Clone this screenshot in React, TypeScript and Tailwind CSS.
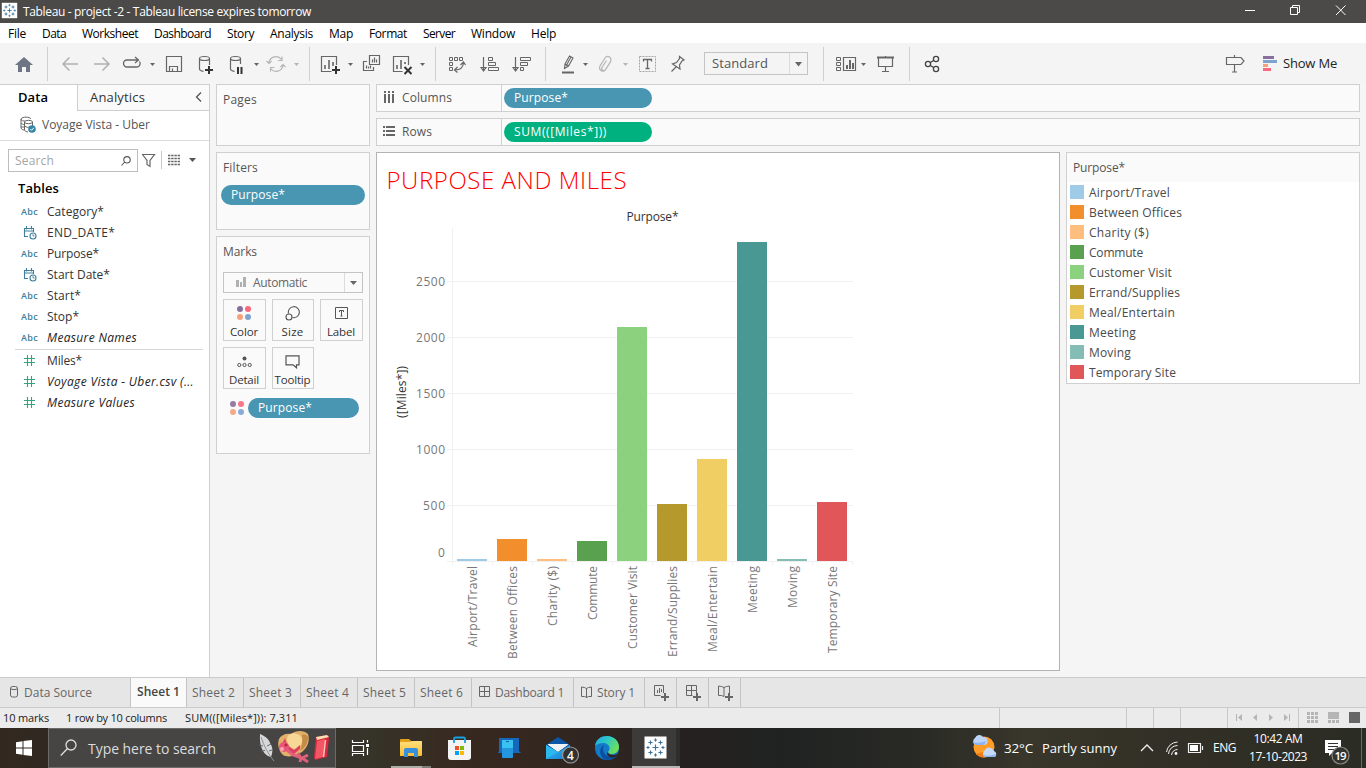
import React, { useLayoutEffect, useRef } from "react";

/* Text set to a fixed advance width by adjusting its tracking. */
function T({ w, className = "", children }: { w: number; className?: string; children: string }) {
  const ref = useRef<HTMLSpanElement>(null);
  useLayoutEffect(() => {
    const el = ref.current;
    if (!el) return;
    el.style.letterSpacing = "0px";
    const natural = el.getBoundingClientRect().width;
    el.style.letterSpacing = `${(w - natural) / children.length}px`;
  }, [w, children]);
  return (
    <span ref={ref} className={`inline-block shrink-0 whitespace-pre ${className}`}>
      {children}
    </span>
  );
}

/* Toolbar cell: spans x..x2 of the toolbar, drawn in window coordinates. */
function Cell({ x, x2, y = 43, h = 41, children }: { x: number; x2: number; y?: number; h?: number; children?: React.ReactNode }) {
  return (
    <svg
      className="block shrink-0"
      width={x2 - x}
      height={h}
      viewBox={`${x} ${y} ${x2 - x} ${h}`}
      fill="none"
      stroke="#666"
      strokeWidth="1.2"
    >
      {children}
    </svg>
  );
}

const Sep = () => <div className="mt-1 h-[34px] w-px shrink-0 bg-[#d0d0d0]" />;
const Caret = ({ x, c = "#666" }: { x: number; c?: string }) => <path d={`M${x} 63h5l-2.5 3z`} fill={c} stroke="none" />;
const Plus = ({ x, y, c = "#333" }: { x: number; y: number; c?: string }) => (
  <path d={`M${x - 4} ${y}h8M${x} ${y - 4}v8`} stroke={c} strokeWidth="2" />
);

function Snowflake({ x, y, s, c }: { x: number; y: number; s: number; c: string }) {
  const plus = (px: number, py: number, r: number) => `M${px - r} ${py}h${2 * r}M${px} ${py - r}v${2 * r}`;
  return (
    <g transform={`translate(${x} ${y}) scale(${s})`}>
      <rect x="-11" y="-11" width="22" height="22" fill="#fff" stroke="none" />
      <path
        d={plus(0, 0, 3) + plus(-5, -5, 2.1) + plus(5, -5, 2.1) + plus(-5, 5, 2.1) + plus(5, 5, 2.1)}
        stroke={c}
        strokeWidth="1.2"
      />
      <path d={plus(0, -7.5, 1.6) + plus(0, 7.5, 1.6) + plus(-7.5, 0, 1.6) + plus(7.5, 0, 1.6)} stroke={c} strokeWidth="1" />
    </g>
  );
}

const menus: [string, number][] = [
  ["File", 18],
  ["Data", 24],
  ["Worksheet", 56],
  ["Dashboard", 57],
  ["Story", 27],
  ["Analysis", 43],
  ["Map", 24],
  ["Format", 38],
  ["Server", 32],
  ["Window", 44],
  ["Help", 25],
];

function TitleBar() {
  return (
    <div className="flex h-[23px] bg-[#4b4a48] text-white">
      <Cell x={0} x2={23} y={0} h={23}>
        <Snowflake x={9.5} y={10.5} s={0.7} c="#2c6e9b" />
      </Cell>
      <T w={288} className="text-[12px] leading-[23px]">
        Tableau - project -2 - Tableau license expires tomorrow
      </T>
      <div className="ml-auto">
        <Cell x={1226} x2={1366} y={0} h={23}>
          <g stroke="#fff" strokeWidth="1">
            <path d="M1245 10.5h10M1290.500 7.500h7v7h-7zM1292.500 7.500v-2h7v7h-2M1336 5.500l9.500 9.500M1345.500 5.500L1336 15" />
          </g>
        </Cell>
      </div>
    </div>
  );
}

function MenuBar() {
  return (
    <div className="flex h-5 gap-4 bg-white pl-2 text-[12px] leading-[21px] text-black">
      {menus.map(([m, w]) => (
        <T key={m} w={w}>
          {m}
        </T>
      ))}
    </div>
  );
}

function Toolbar() {
  return (
    <div className="flex h-[41px] bg-[#f4f4f4]">
      <Cell x={0} x2={47}>
        <path d="M24 57l9 8h-3v7h-4v-5h-4v5h-4v-7h-3z" fill="#6d7682" stroke="none" />
      </Cell>
      <Sep />
      <Cell x={48} x2={309}>
        <g stroke="#b0b0b0" strokeWidth="1.5">
          <path d="M78 64H63M69.500 57.500L63 64l6.500 6.500M94 64h15M102.500 57.500L109 64l-6.500 6.500" />
        </g>
        <path d="M132 60h-5a3.500 3.500 0 0 0 0 7h10a3.500 3.500 0 0 0 2.500-5.500M131 60h7M135 57l3.500 3-3.500 3" strokeWidth="1.300" />
        <Caret x={150} />
        <path d="M166.500 56.500h15v15h-15zM169.500 71.500v-5h8v5M172.500 71v-2.500" />
        <path d="M199.500 59v10c0 1.500 2 2 4 2.300M209.500 59v6" />
        <ellipse cx="204.500" cy="58.500" rx="5" ry="2" />
        <Plus x={209} y={70} />
        <path d="M230.500 59v10c0 1.500 2 2 4 2.300M240.500 59v5" />
        <ellipse cx="235.500" cy="58.500" rx="5" ry="2" />
        <path d="M238 67v7M241.500 67v7" stroke="#333" strokeWidth="2" />
        <Caret x={254} />
        <g stroke="#b5b5b5">
          <path d="M269 62.500a7 7 0 0 1 12.500-3M283 65.500a7 7 0 0 1-12.500 3M278 60.500h4v-4M274.500 67.500h-4v4M266.500 61l2.500 2.500 2.500-2.500M280.500 67l2.500-2.500 2.500 2.500" />
        </g>
        <Caret x={294} c="#b5b5b5" />
      </Cell>
      <Sep />
      <Cell x={310} x2={435}>
        <path d="M336.500 65v-8.500h-15v15h10" strokeWidth="1.200" />
        <path d="M325 69v-4M329 69v-9M333 66v-4" strokeWidth="1.600" />
        <Plus x={336} y={70} />
        <Caret x={348} />
        <path d="M369.500 55.500h10v9h-10zM367 61.500h-3.500v9h10v-3.500M372.500 62.500v-3M374.500 62.500v-5M376.500 62.500v-3M366.500 68.500v-3M368.500 68.500v-2M370.500 68.500v-3" />
        <path d="M408.500 65v-8.500h-15v15h9" strokeWidth="1.200" />
        <path d="M397 69v-4M401 69v-9M405 64v-2" strokeWidth="1.600" />
        <path d="M404.500 67l7 7M411.500 67l-7 7" stroke="#333" strokeWidth="2" />
        <Caret x={420} />
      </Cell>
      <Sep />
      <Cell x={436} x2={545}>
        <path d="M449.500 57.500h3v3h-3zM454.500 57.500h3v3h-3zM459.500 57.500h3v3h-3zM449.500 62.500h3v3h-3zM449.500 67.500h3v3h-3z" strokeWidth="1" />
        <path d="M455 70c5 0 8-2 8.500-7M457.500 67l-3 3 3 2.500M460.500 65l3-3 2 3" />
        <path d="M483.500 57v13M481 67.500l2.500 3.500 2.500-3.500zM515.500 57v13M513 67.500l2.500 3.500 2.500-3.500z" />
        <path d="M488.500 57.500h4v3h-4zM488.500 62.500h7v3h-7zM488.500 67.500h10v3h-10zM520.500 57.500h10v3h-10zM520.500 62.500h7v3h-7zM520.500 67.500h3v3h-3z" strokeWidth="1" />
      </Cell>
      <Sep />
      <Cell x={546} x2={704}>
        <path d="M565 64l4.500-8 3.500 2-4.500 8-4 2.500zM565 64l3.500 2M571 57l-5 9" strokeWidth="1.100" />
        <path d="M562 72.500h12" strokeWidth="2" />
        <Caret x={583} />
        <path d="M600 66l5-8a3.200 3.200 0 0 1 5.500 3.500l-5 8a2 2 0 0 1-3.500-2l4.500-7M601 64c-2 3-2 5 0 6.500s4 .5 5-1.500l5-8" stroke="#b5b5b5" />
        <Caret x={623} c="#b5b5b5" />
        <path d="M639.500 56.500h16v15h-16z" strokeDasharray="2 1" stroke="#a5a5a5" strokeWidth="1" />
        <path d="M643.500 61.500v-2h8v2M647.500 59.500v9M645.500 68.500h4" strokeWidth="1.300" />
        <path d="M679.500 56.500l4.500 3.500-2 1-2.500 4 .5 4-7.500-5 4-1.500 3-4zM676 67l-4.500 4.500" />
      </Cell>
      <div className="mt-[9px] flex h-[23px] w-[104px] shrink-0 border border-[#c4c4c4]">
        <div className="w-[85px] border-r border-[#dcdcdc] pl-[7px] text-[13px] leading-[20px] text-[#555]">
          <T w={56}>Standard</T>
        </div>
        <svg className="ml-[5px] mt-[9px]" width="8" height="5" viewBox="0 0 8 5">
          <path d="M0 0h7L3.500 4.500z" fill="#666" />
        </svg>
      </div>
      <Cell x={808} x2={823} />
      <Sep />
      <Cell x={824} x2={909}>
        <path d="M836.500 57.500h4v3h-4zM836.500 62.500h4v3h-4zM836.500 67.500h4v3h-4z" strokeWidth="1" />
        <path d="M843.500 57.500h12v13h-12z" />
        <path d="M847 69v-4M850 69v-9M853 69v-6" strokeWidth="2" />
        <Caret x={861} />
        <path d="M877 57.500h17" strokeWidth="2" />
        <path d="M878.500 58v8.500h14V58M885.500 56v2M885.500 67v5M882 71.500h7" />
      </Cell>
      <Sep />
      <Cell x={910} x2={1283}>
        <g stroke="#444" strokeWidth="1.300">
          <circle cx="928" cy="64" r="2.600" />
          <circle cx="936" cy="59" r="2.600" />
          <circle cx="936" cy="69" r="2.600" />
          <path d="M930.500 62.500l3-2M930.500 65.500l3 2" />
        </g>
        <path d="M1226.500 57.500h14.500l3 3.500-3 3.500h-14.500zM1234.500 55v2.500M1234.500 65v7M1232 72h5" />
        <g stroke="none">
          <path d="M1263 56h11v3h-11z" fill="#87719c" />
          <path d="M1263 60h14v3h-14z" fill="#7fa3cf" />
          <path d="M1263 64h5v3h-5z" fill="#f4a27c" />
          <path d="M1263 68h8v3h-8z" fill="#f8697c" />
        </g>
      </Cell>
      <T w={54} className="text-[13px] leading-[40px] text-[#222]">Show Me</T>
    </div>
  );
}

type Field = { kind: "abc" | "date" | "num"; name: string; w: number; italic?: boolean };
const dims: Field[] = [
  { kind: "abc", name: "Category*", w: 57 },
  { kind: "date", name: "END_DATE*", w: 68 },
  { kind: "abc", name: "Purpose*", w: 52 },
  { kind: "date", name: "Start Date*", w: 63 },
  { kind: "abc", name: "Start*", w: 34 },
  { kind: "abc", name: "Stop*", w: 32 },
  { kind: "abc", name: "Measure Names", w: 90, italic: true },
];
const measures: Field[] = [
  { kind: "num", name: "Miles*", w: 35 },
  { kind: "num", name: "Voyage Vista - Uber.csv (...", w: 147, italic: true },
  { kind: "num", name: "Measure Values", w: 88, italic: true },
];

function FieldRow({ f }: { f: Field }) {
  return (
    <div className="flex h-[21px] items-center">
      <div className="flex w-[47px] shrink-0 pl-[21px]">
        {f.kind === "abc" && (
          <T w={17} className="pt-px text-[9px] leading-[20px] font-semibold text-[#3d7f9c]">Abc</T>
        )}
        {f.kind === "date" && (
          <svg className="ml-[2px] mt-px" width="15" height="14" viewBox="0 0 15 14" fill="none" stroke="#3d7f9c" strokeWidth="1.100">
            <path d="M5 10.500H1.500v-8h9V6M1.500 5h9M3.500 0v3.500M8.500 0v3.500" />
            <circle cx="10" cy="10" r="3" />
            <path d="M10 8.200V10h1.500" strokeWidth=".9" />
          </svg>
        )}
        {f.kind === "num" && (
          <svg className="ml-[3px]" width="11" height="11" viewBox="0 0 11 11" fill="none" stroke="#2fa67c" strokeWidth="1.100">
            <path d="M3.500 0v11M7.500 0v11M0 3.500h11M0 7.500h11" />
          </svg>
        )}
      </div>
      <T w={f.w} className={f.italic ? "text-[12px] leading-[20px] italic text-[#222]" : "text-[12px] leading-[20px] text-[#333]"}>
        {f.name}
      </T>
    </div>
  );
}

function DataPane() {
  return (
    <div className="flex w-[210px] shrink-0 flex-col border-r border-t border-[#cfcfcf] bg-white">
      <div className="flex h-[26px] shrink-0">
        <div className="w-[77px] pl-[18px] text-[13px] leading-[25px] font-semibold text-black">
          <T w={30}>Data</T>
        </div>
        <div className="flex flex-1 border-b border-l border-[#cfcfcf] bg-[#fafafa] pl-3 text-[13px] leading-[25px] text-[#333]">
          <T w={55}>Analytics</T>
          <svg className="ml-[50px] mt-[7px]" width="7" height="10" viewBox="0 0 7 10" fill="none" stroke="#555" strokeWidth="1.300">
            <path d="M6 .5L1.500 5 6 9.500" />
          </svg>
        </div>
      </div>
      <div className="flex h-[30px] shrink-0 border-b border-[#dcdcdc] text-[12px] leading-[28px] text-[#555]">
        <svg className="ml-5 mr-[5px] mt-[5px] shrink-0" width="17" height="18" viewBox="0 0 17 18" fill="none" stroke="#666" strokeWidth="1">
          <path d="M1 3v9c0 1 2 2 3 2M11 3C10 .5 2 .5 1 3c0 2 3 2 4 2M1 7c1 1 2 1.500 3 1.500M1 11h3" />
          <ellipse cx="8.500" cy="6" rx="4" ry="1.700" />
          <path d="M4.500 6v8c0 1 2 2 3.500 2M12.500 6v4M4.500 10c2 1.500 4 1.500 5 1" />
          <circle cx="12" cy="13" r="3.800" fill="#3485a8" stroke="none" />
          <path d="M10.300 13l1.300 1.300 2.200-2.500" stroke="#fff" />
        </svg>
        <T w={108}>Voyage Vista - Uber</T>
      </div>
      <div className="mt-2 flex h-[23px] shrink-0 pl-2">
        <div className="flex h-[23px] w-[130px] border border-[#bdbdbd] pl-[6px] text-[12px] leading-[22px] text-[#a5a5a5]">
          <T w={39}>Search</T>
          <svg className="ml-[67px] mt-[6px]" width="10" height="10" viewBox="0 0 10 10" fill="none" stroke="#555" strokeWidth="1.100">
            <circle cx="6" cy="3.800" r="3.200" />
            <path d="M3.700 6L.5 9.500" />
          </svg>
        </div>
        <svg className="ml-1" width="60" height="23" viewBox="142 149 60 23" fill="none" stroke="#666" strokeWidth="1.200">
          <path d="M142.500 154.500h12l-4.500 6v6l-3-2v-4z" />
          <path d="M161.500 151v18" stroke="#ccc" strokeWidth="1" />
          <path d="M168 155.500h12M168 158.500h12M168 161.500h12M168 164.500h12" strokeDasharray="2.400 .8" strokeWidth="1.500" />
          <path d="M189 158h7l-3.500 4z" fill="#555" stroke="none" />
        </svg>
      </div>
      <div className="mt-[6px] h-[23px] pl-[18px] text-[13px] leading-[20px] font-semibold text-black">
        <T w={41}>Tables</T>
      </div>
      <div className="h-[148px]">
        {dims.map((f) => (
          <FieldRow key={f.name} f={f} />
        ))}
      </div>
      <div className="ml-[15px] mr-[6px] h-px shrink-0 bg-[#d6d6d6]" />
      <div>
        {measures.map((f) => (
          <FieldRow key={f.name} f={f} />
        ))}
      </div>
    </div>
  );
}

function Dots() {
  return (
    <svg width="14" height="14" viewBox="0 0 14 14">
      <circle cx="3" cy="3" r="3" fill="#87719c" />
      <circle cx="11" cy="3" r="3" fill="#f8697c" />
      <circle cx="3" cy="11" r="3" fill="#f4a27c" />
      <circle cx="11" cy="11" r="3" fill="#7fa3cf" />
    </svg>
  );
}

function MarkButton({ label, w, children }: { label: string; w: number; children: React.ReactNode }) {
  return (
    <div className="flex h-[42px] flex-col items-center border border-[#d0d0d0] pr-px pt-[6px] text-[11.5px] leading-[18px] text-[#333]">
      <div className="flex h-[17px] shrink-0">{children}</div>
      <T w={w}>{label}</T>
    </div>
  );
}

function Pill({ className, w, children }: { className: string; w: number; children: string }) {
  return (
    <div className={`h-5 rounded-full pl-[10px] leading-[20px] font-medium text-white ${className}`}>
      <T w={w}>{children}</T>
    </div>
  );
}

function Shelves() {
  return (
    <div className="ml-[6px] flex w-[154px] shrink-0 flex-col gap-[6px] text-[12px] text-[#555]">
      <div className="h-[62px] border border-[#d0d0d0] bg-[#fafafa] pl-[6px] leading-[30px]">
        <T w={34}>Pages</T>
      </div>
      <div className="h-[78px] border border-[#d0d0d0] bg-[#fafafa]">
        <div className="h-8 pl-[6px] leading-[30px]">
          <T w={35}>Filters</T>
        </div>
        <Pill w={54} className="mx-1 bg-[#4996b2]">Purpose*</Pill>
      </div>
      <div className="h-[218px] border border-[#d0d0d0] bg-[#fafafa]">
        <div className="h-[35px] pl-[6px] leading-[30px]">
          <T w={34}>Marks</T>
        </div>
        <div className="ml-[6px] flex h-[21px] w-[140px] border border-[#c4c4c4] leading-[20px] text-[#666]">
          <div className="flex w-[121px] border-r border-[#dcdcdc]">
            <svg className="ml-3 mr-[7px] mt-[4px]" width="10" height="11" viewBox="0 0 10 11">
              <path d="M0 3h3v7H0zM4 5h2v5H4zM7 0h3v10H7z" fill="#b0b0b0" />
            </svg>
            <T w={54}>Automatic</T>
          </div>
          <svg className="ml-[5px] mt-2" width="8" height="5" viewBox="0 0 8 5">
            <path d="M0 0h7L3.500 4z" fill="#666" />
          </svg>
        </div>
        <div className="ml-[6px] mt-[6px] grid grid-cols-[43px_42px_43px] gap-[6px]">
          <MarkButton label="Color" w={28}>
            <Dots />
          </MarkButton>
          <MarkButton label="Size" w={22}>
            <svg width="15" height="15" viewBox="0 0 15 15" fill="none" stroke="#555" strokeWidth="1.100">
              <path d="M3.500 7.500a5.500 5.500 0 1 1 4 4" />
              <circle cx="4" cy="11" r="3" />
            </svg>
          </MarkButton>
          <MarkButton label="Label" w={28}>
            <svg className="mt-px" width="13" height="13" viewBox="0 0 13 13" fill="none" stroke="#555" strokeWidth="1">
              <path d="M.5.5h12v11H.5zM4.500 5V3.500h4V5M6.500 3.500v5.500M5.500 9h2" />
            </svg>
          </MarkButton>
          <MarkButton label="Detail" w={30}>
            <svg className="mt-[2px]" width="15" height="12" viewBox="0 0 15 12" fill="none" stroke="#555" strokeWidth="1">
              <circle cx="7.500" cy="2.500" r="2" fill="#555" stroke="none" />
              <circle cx="2.300" cy="9" r="1.600" />
              <circle cx="7.500" cy="9" r="1.600" />
              <circle cx="12.700" cy="9" r="1.600" />
            </svg>
          </MarkButton>
          <MarkButton label="Tooltip" w={36}>
            <svg className="mt-px" width="15" height="14" viewBox="0 0 15 14" fill="none" stroke="#555" strokeWidth="1.200">
              <path d="M1 .8h13v9h-2.500v3L8 9.800H1z" />
            </svg>
          </MarkButton>
        </div>
        <div className="mt-[9px] flex pl-[13px]">
          <div className="mr-1 mt-[3px] opacity-90">
            <Dots />
          </div>
          <Pill w={54} className="w-[111px] bg-[#4996b2]">Purpose*</Pill>
        </div>
      </div>
    </div>
  );
}

type Bar = { name: string; color: string; top: number; lw: number };
const bars: Bar[] = [
  { name: "Airport/Travel", color: "#a0cbe8", top: 559, lw: 81 },
  { name: "Between Offices", color: "#f28e2b", top: 539, lw: 93 },
  { name: "Charity ($)", color: "#ffbe7d", top: 559, lw: 60 },
  { name: "Commute", color: "#59a14f", top: 541, lw: 54 },
  { name: "Customer Visit", color: "#8cd17d", top: 327, lw: 83 },
  { name: "Errand/Supplies", color: "#b6992d", top: 504, lw: 91 },
  { name: "Meal/Entertain", color: "#f1ce63", top: 459, lw: 86 },
  { name: "Meeting", color: "#499894", top: 242, lw: 47 },
  { name: "Moving", color: "#86bcb6", top: 559, lw: 42 },
  { name: "Temporary Site", color: "#e15759", top: 502, lw: 87 },
];

function Chart() {
  return (
    <svg className="block" width="682" height="517" viewBox="377 153 682 517" fontFamily="'Open Sans', sans-serif" fontSize="12">
      <text x="386.500" y="189" fontSize="24" fontWeight="300" fill="#f00" textLength="240">PURPOSE AND MILES</text>
      <text x="626.500" y="221" fill="#333" textLength="52">Purpose*</text>
      <text transform="translate(406 418) rotate(-90)" fill="#333" textLength="52">([Miles*])</text>
      <g stroke="#f0f0f0" strokeWidth="1">
        <path d="M452.500 228v337M447 281.500h406M447 337.500h406M447 393.500h406M447 449.500h406M447 505.500h406M447 561.500h406" />
        <path d="M492.500 561v4M532.500 561v4M572.500 561v4M612.500 561v4M652.500 561v4M692.500 561v4M732.500 561v4M772.500 561v4M812.500 561v4M852.500 561v4" />
      </g>
      {[2500, 2000, 1500, 1000].map((v, i) => (
        <text key={v} x="416" y={286 + i * 56} fill="#787878" textLength="29">{v}</text>
      ))}
      <text x="423" y="510" fill="#787878" textLength="22">500</text>
      <text x="438" y="557" fill="#787878">0</text>
      {bars.map((b, i) => (
        <g key={b.name}>
          <rect x={457 + i * 40} y={b.top} width="30" height={561 - b.top} fill={b.color} />
          <text transform={`translate(${476.5 + i * 40} ${566 + b.lw}) rotate(-90)`} fill="#787878" textLength={b.lw}>
            {b.name}
          </text>
        </g>
      ))}
    </svg>
  );
}

function Workspace() {
  return (
    <div className="ml-[6px] flex w-[984px] shrink-0 flex-col text-[12px]">
      <div className="flex h-[28px] border border-[#d0d0d0] bg-[#fafafa] leading-[26px] text-[#555]">
        <div className="flex w-[125px] border-r border-[#d0d0d0]">
          <svg className="ml-[7px] mr-[7px] mt-[6px]" width="11" height="13" viewBox="0 0 11 13" fill="#666">
            <path d="M0 0h2v2H0zM4 0h2v2H4zM8 0h2v2H8zM0 3h2v9H0zM4 3h2v9H4zM8 3h2v9H8z" />
          </svg>
          <T w={50}>Columns</T>
        </div>
        <Pill w={54} className="ml-[2px] mt-[3px] w-[148px] bg-[#4996b2]">Purpose*</Pill>
      </div>
      <div className="mt-[6px] flex h-[28px] border border-[#d0d0d0] bg-[#fafafa] leading-[26px] text-[#555]">
        <div className="flex w-[125px] border-r border-[#d0d0d0]">
          <svg className="ml-[6px] mr-[7px] mt-[7px]" width="12" height="11" viewBox="0 0 12 11" fill="#666">
            <path d="M0 0h2v2H0zM3 0h9v2H3zM0 4h2v2H0zM3 4h9v2H3zM0 8h2v2H0zM3 8h9v2H3z" />
          </svg>
          <T w={30}>Rows</T>
        </div>
        <Pill w={93} className="ml-[2px] mt-[3px] w-[148px] bg-[#00b180]">SUM(([Miles*]))</Pill>
      </div>
      <div className="mt-[6px] flex items-start">
        <div className="h-[519px] w-[684px] border border-[#b3b3b3] bg-white">
          <Chart />
        </div>
        <div className="ml-[6px] h-[232px] w-[294px] border border-[#d0d0d0] bg-white">
          <div className="mb-[2px] h-[29px] bg-[#fafafa] pl-[6px] leading-[29px] text-[#555]">
            <T w={52}>Purpose*</T>
          </div>
          {bars.map((b) => (
            <div key={b.name} className="flex h-5 pl-[3px] pt-px leading-[16px] text-[#4a4a4a]">
              <div className="mr-[5px] h-[14px] w-[14px]" style={{ backgroundColor: b.color }} />
              <T w={b.lw}>{b.name}</T>
            </div>
          ))}
        </div>
      </div>
    </div>
  );
}

const sheets = ["Sheet 2", "Sheet 3", "Sheet 4", "Sheet 5", "Sheet 6"];

function SheetTabs() {
  const tab = "flex h-full shrink-0 border-r border-[#c4c4c4]";
  return (
    <div className="flex h-[31px] border-b border-t border-[#cbcbcb] bg-[#e6e6e6] text-[12px] leading-[29px] text-[#666]">
      <div className={`${tab} w-[131px]`}>
        <svg className="ml-[10px] mr-[6px] mt-2" width="8" height="12" viewBox="0 0 8 12" fill="none" stroke="#666">
          <rect x=".5" y=".5" width="7" height="10.500" rx="2" />
          <path d="M.5 2.500c1.500 1.500 5.500 1.500 7 0" />
        </svg>
        <T w={68}>Data Source</T>
      </div>
      <div className={`${tab} w-[56px] bg-[#fafafa] pl-[6px] leading-[27px] font-semibold text-[#444]`}>
        <T w={43}>Sheet 1</T>
      </div>
      {sheets.map((s) => (
        <div key={s} className={`${tab} w-[57px] pl-[5px]`}>
          <T w={43}>{s}</T>
        </div>
      ))}
      <div className={`${tab} w-[102px]`}>
        <svg className="ml-[7px] mr-[4px] mt-2" width="12" height="12" viewBox="0 0 12 12" fill="none" stroke="#666">
          <path d="M.5.5h10v10H.5zM5.500.5v10M.5 5.500h10" />
        </svg>
        <T w={69}>Dashboard 1</T>
      </div>
      <div className={`${tab} w-[71px]`}>
        <svg className="ml-[7px] mr-[4px] mt-2" width="12" height="12" viewBox="0 0 12 12" fill="none" stroke="#666">
          <path d="M.5 1l3 .5L5.500 2.500 7.500 1.500l3-.5v9.500h-3L5.500 11.500 3.500 10.500h-3zM5.500 2.500v9" />
        </svg>
        <T w={38}>Story 1</T>
      </div>
      <div className={`${tab} w-[32px]`}>
        <Cell x={645} x2={676} y={678} h={29}>
          <path d="M663.500 693v-7.500h-9v10h6M657.500 693v-3M659.500 693v-5M661.500 692v-3" strokeWidth="1" />
          <Plus x={665} y={697} c="#666" />
        </Cell>
      </div>
      <div className={`${tab} w-[32px]`}>
        <Cell x={677} x2={708} y={678} h={29}>
          <path d="M696.500 693v-7.500h-10v10h6M691.500 686v9M686.500 690.500h10" strokeWidth="1" />
          <Plus x={697} y={697} c="#666" />
        </Cell>
      </div>
      <div className={`${tab} w-[32px]`}>
        <Cell x={709} x2={740} y={678} h={29}>
          <path d="M718.500 686l3 .5 2.500 1 2.500-1 3-.5v7M724 687.500v9l-2.500-1h-3V686" strokeWidth="1" />
          <Plus x={729} y={697} c="#666" />
        </Cell>
      </div>
    </div>
  );
}

function StatusBar() {
  return (
    <div className="flex h-5 bg-[#ebebeb] text-[11px] leading-[20px] text-[#222]">
      <T w={46} className="ml-[3px]">10 marks</T>
      <T w={101} className="ml-[17px]">1 row by 10 columns</T>
      <T w={113} className="ml-[18px]">{"SUM(([Miles*])): 7,311"}</T>
      <div className="ml-auto">
        <Cell x={999} x2={1366} y={708} h={20}>
          <path d="M999.500 708v20M1126.500 708v20M1153.500 708v20M1180.500 708v20M1227.500 708v20M1298.500 708v20" stroke="#c8c8c8" strokeWidth="1" />
          <g fill="#b5b5b5" stroke="none">
            <path d="M1236 714h1v7h-1zM1242 714v7l-4-3.500zM1257 714v7l-4-3.500zM1269 714v7l4-3.500zM1284 714v7l4-3.500zM1289 714h1v7h-1z" />
            <path d="M1307 712h3v3h-3zM1311 712h3v3h-3zM1315 712h3v3h-3zM1307 716h3v3h-3zM1311 716h3v3h-3zM1315 716h3v3h-3zM1307 720h3v3h-3zM1311 720h3v3h-3zM1315 720h3v3h-3z" />
            <path d="M1328 712h11v7h-11zM1328 720h3v3h-3zM1332 720h3v3h-3zM1336 720h3v3h-3z" />
            <path d="M1349 712h11v11h-11z" fill="#666" />
          </g>
        </Cell>
      </div>
    </div>
  );
}

function Taskbar() {
  return (
    <div className="flex h-10 bg-[linear-gradient(90deg,#33281f_0%,#302921_3%,#36352b_26%,#38291f_34%,#302521_44%,#242120_51%,#202222_57%,#292a25_67%,#39362b_75%,#343127_82%,#2b2c24_100%)] text-white">
      <Cell x={0} x2={48} y={728} h={40}>
        <path d="M16 742.300l6.500-1v6.200H16zM23.500 741.100l8.500-1.200v7.600h-8.500zM16 748.500h6.500v6.200l-6.500-1zM23.500 748.500H32v7.600l-8.500-1.200z" fill="#fff" stroke="none" />
      </Cell>
      <div className="flex w-[288px] shrink-0 border border-[#6c6b69] bg-[#464544]">
        <svg className="ml-[11px] mr-[10px] mt-[10px] shrink-0" width="18" height="18" viewBox="0 0 18 18" fill="none" stroke="#ddd" strokeWidth="1.300">
          <circle cx="11" cy="6" r="5" />
          <path d="M7.500 9.500L.8 16.500" />
        </svg>
        <T w={128} className="text-[14px] leading-[39px] text-[#dcdcdc]">Type here to search</T>
        <svg className="ml-auto mr-[3px]" width="76" height="38" viewBox="257 729 76 38">
          <path d="M261 734c5 2 9 5 10 9 3 4 3 9 1 14-7-1-12-10-11-23z" fill="#d6d8da" />
          <path d="M262 737c3 9 7 17 13 24" stroke="#8d9296" strokeWidth="1" fill="none" />
          <path d="M260 745l4 1M262 751l4-.5M272 744l-4 2M273 750l-3 1" stroke="#5b5f62" strokeWidth=".9" />
          <path d="M280 739c2-4 7-6 12-5 5-4 13-4 17 0 2 6 0 13-6 18-6 4-14 6-19 3-4-4-6-10-4-16z" fill="#e3b06a" />
          <path d="M288 739c0-5 6-7 10-5 4 1 6 4 5 8-1 4-4 6-7 7-5-1-8-5-8-10z" fill="#f7d696" />
          <path d="M303 735c3-1 5 0 6 2 0 6-3 11-8 14 2-5 3-10 2-16z" fill="#c58a45" />
          <path d="M286 738c1 6 4 9 9 12l6-5v4l-6 5c-6-2-10-7-11-12z" fill="#df3e61" />
          <circle cx="285" cy="747" r="5" fill="#e95676" />
          <circle cx="283" cy="749" r="2" fill="#ffa8b3" />
          <circle cx="287" cy="745" r="1.600" fill="#b92848" />
          <path d="M288 750l6 5 9 3M299 753l3 6M303 758l6-3M303 758l6 4M302 758l-1 4" stroke="#e0607a" strokeWidth="3" fill="none" />
          <path d="M317 737l11-2 2 3-2 19-12 3-1-3z" fill="#d9293e" />
          <path d="M317 737l11-2 2 2-12 3z" fill="#f9dfb1" />
          <path d="M318 741l8-2-2 18-8 2z" fill="#f35664" />
          <path d="M326.500 740l-2 17" stroke="#ffc5bd" strokeWidth="1.500" />
        </svg>
      </div>
      <Cell x={336} x2={391} y={728} h={40}>
        <path d="M352.500 740v2.500h11V740M352.500 745.500h11v6h-11zM352.500 756v-2.500h11v2.500M367.500 740v2.500M367.500 748v7" stroke="#fff" />
        <path d="M366 744h3v3h-3z" fill="#fff" stroke="none" />
      </Cell>
      <Cell x={391} x2={632} y={728} h={40}>
        <defs>
          <linearGradient id="mailFlap" x1="0" y1="0" x2="1" y2="1">
            <stop offset="0" stopColor="#2fc9f4" />
            <stop offset="1" stopColor="#1979d5" />
          </linearGradient>
          <linearGradient id="folder" x1="0" y1="0" x2="0" y2="1">
            <stop offset="0" stopColor="#ffdf7c" />
            <stop offset="1" stopColor="#fbbd31" />
          </linearGradient>
          <linearGradient id="edgeTop" x1="0" y1="0" x2="1" y2="0.500">
            <stop offset="0" stopColor="#22a5e7" />
            <stop offset=".5" stopColor="#2dc9c5" />
            <stop offset="1" stopColor="#6de05a" />
          </linearGradient>
        </defs>
        <g stroke="none">
          <path d="M400 740q0-1 1-1h8l2 2h11v14h-22z" fill="#e3a21a" />
          <path d="M400 742h10l2-1h9q1 0 1 1v13q0 1-1 1h-21z" fill="url(#folder)" />
          <path d="M404 757v-7q0-2 2-2h10q2 0 2 2v7h-4v-4h-6v4z" fill="#3690db" />
          <path d="M391 766h31v2h-31z" fill="#adada7" />
          <path d="M422 766h9v2h-9z" fill="#7e7e79" />
          <path d="M448 740h23v17q0 3-3 3h-17q-3 0-3-3z" fill="#f4f4f4" />
          <path d="M454 743v-4q0-1.500 1.500-1.500h8q1.500 0 1.500 1.500v4" fill="none" stroke="#1a9fe0" strokeWidth="1.800" />
          <path d="M455 746h4v4h-4z" fill="#f15124" />
          <path d="M460 746h4v4h-4z" fill="#7fba10" />
          <path d="M455 751h4v4h-4z" fill="#00a4ef" />
          <path d="M460 751h4v4h-4z" fill="#ffb900" />
          <path d="M499 738h20v13l2 2h-23l1-2z" fill="#1668bd" />
          <path d="M502 740h11v17q0 1-1 1h-9q-1 0-1-1z" fill="#2496de" />
          <path d="M502 740h11v8h-11z" fill="#39c2ef" />
          <path d="M506 741.500h3" stroke="#176bb0" />
          <path d="M546 745l12-8 12 8v5h-24z" fill="#0b56a6" />
          <path d="M547.500 744h21l-10.500 8z" fill="#eef2f5" />
          <path d="M546 745l12 7 12-7v14h-24z" fill="url(#mailFlap)" />
          <path d="M547.500 744.500h21l-10.500 7z" fill="#eef2f5" />
          <path d="M546 745.500v13.500l12-7z" fill="#2cb8ef" />
          <circle cx="570.500" cy="755" r="8" fill="#333233" stroke="#999" />
          <circle cx="607" cy="748" r="12" fill="#127ac9" />
          <path d="M595 746c1-7 6-10 12-10 7 0 12 5 12 11 0 4-3 7-7 7-3 0-4-1-4-2 3-3 2-8-4-9-4 0-7 1-9 3z" fill="url(#edgeTop)" />
          <path d="M604 745c-3 6 1 12 8 12 3 0 4-1 5-1-3 3-6 4-10 4-8-1-9-12-3-15z" fill="#0b4f9e" />
          <path d="M608 752c0 2 2 3 5 3 2 0 4-1 5-2-1 2-2 3-3 4-6 2-10-3-7-5z" fill="#302521" />
        </g>
        <text x="567" y="759.500" fontFamily="'Open Sans', sans-serif" fontWeight="600" fontSize="12" fill="#fff" stroke="none">4</text>
      </Cell>
      <div className="h-10 w-[48px] shrink-0 bg-[#3c3b3a]">
        <Cell x={632} x2={680} y={728} h={40}>
          <path d="M676 728h4v40h-4z" fill="#2f2e2d" stroke="none" />
          <Snowflake x={655.5} y={747.5} s={1} c="#3c7399" />
          <path d="M632 767h48" stroke="#b5b5b2" strokeWidth="2" />
        </Cell>
      </div>
      <Cell x={680} x2={1004} y={728} h={40}>
        <g stroke="none">
          <circle cx="984" cy="747" r="10.500" fill="#ff9d28" />
          <path d="M976 754a10.500 10.500 0 0 0 18-5z" fill="#f27b16" />
          <path d="M975.500 745a4 4 0 0 1-.5-7 4.500 4.500 0 0 1 8-1 4 4 0 0 1 1 8z" fill="#bcd3fa" />
          <path d="M972.500 742q7 2 13-1 0 4-3 4h-7z" fill="#8db4ef" />
          <path d="M985 757a4 4 0 0 1 0-7 5 5 0 0 1 9 1 3.500 3.500 0 0 1 1 6z" fill="#c4d9fc" />
          <path d="M983 755q7 2 13-1 0 3-3 3h-8z" fill="#8db4ef" />
        </g>
      </Cell>
      <T w={29} className="mr-px text-[13.500px] leading-[40px]">32°C</T>
      <T w={75} className="ml-2 text-[13px] leading-[40px]">Partly sunny</T>
      <Cell x={1117} x2={1213} y={728} h={40}>
        <g stroke="#f0f0f0" strokeWidth="1.300">
          <path d="M1141 751l6-6 6 6" />
          <path d="M1166.500 752a11.500 11.500 0 0 1 11-10M1168.500 754a9 9 0 0 1 9-8.500M1171.500 755a6 6 0 0 1 6-5.500" strokeWidth="1" />
          <circle cx="1176" cy="753.500" r="1.400" fill="#fff" stroke="none" />
          <path d="M1188.500 743.500h12v9h-12zM1202.500 746v4" strokeWidth="1.200" />
          <path d="M1190 745h8v6h-8z" fill="#fff" stroke="none" />
        </g>
      </Cell>
      <T w={23} className="text-[12px] leading-[40px]">ENG</T>
      <div className="ml-3 flex w-[60px] shrink-0 flex-col items-center pt-[2px] text-[12px] leading-[18px]">
        <T w={49}>10:42 AM</T>
        <T w={58}>17-10-2023</T>
      </div>
      <div className="ml-auto">
        <Cell x={1309} x2={1366} y={728} h={40}>
          <path d="M1325 740h16v13h-9l-3 3v-3h-4z" fill="#fff" stroke="none" />
          <path d="M1328 743.500h10M1328 746.500h10M1328 749.500h6" stroke="#333" strokeWidth="1" />
          <circle cx="1340.500" cy="755.500" r="8.500" fill="#33342f" stroke="#8a8a85" />
          <text x="1334.500" y="759.500" textLength="12" fontFamily="'Open Sans', sans-serif" fontWeight="600" fontSize="11.500" fill="#fff" stroke="none">19</text>
          <path d="M1361.500 728v40" stroke="#6b6a60" strokeWidth="1" />
        </Cell>
      </div>
    </div>
  );
}

export default function App() {
  return (
    <div className="flex h-[768px] w-[1366px] flex-col overflow-hidden bg-[#f5f5f5] font-['Open_Sans','Noto_Sans',sans-serif]">
      <TitleBar />
      <MenuBar />
      <Toolbar />
      <div className="flex h-[593px] shrink-0">
        <DataPane />
        <Shelves />
        <Workspace />
      </div>
      <SheetTabs />
      <StatusBar />
      <Taskbar />
    </div>
  );
}
